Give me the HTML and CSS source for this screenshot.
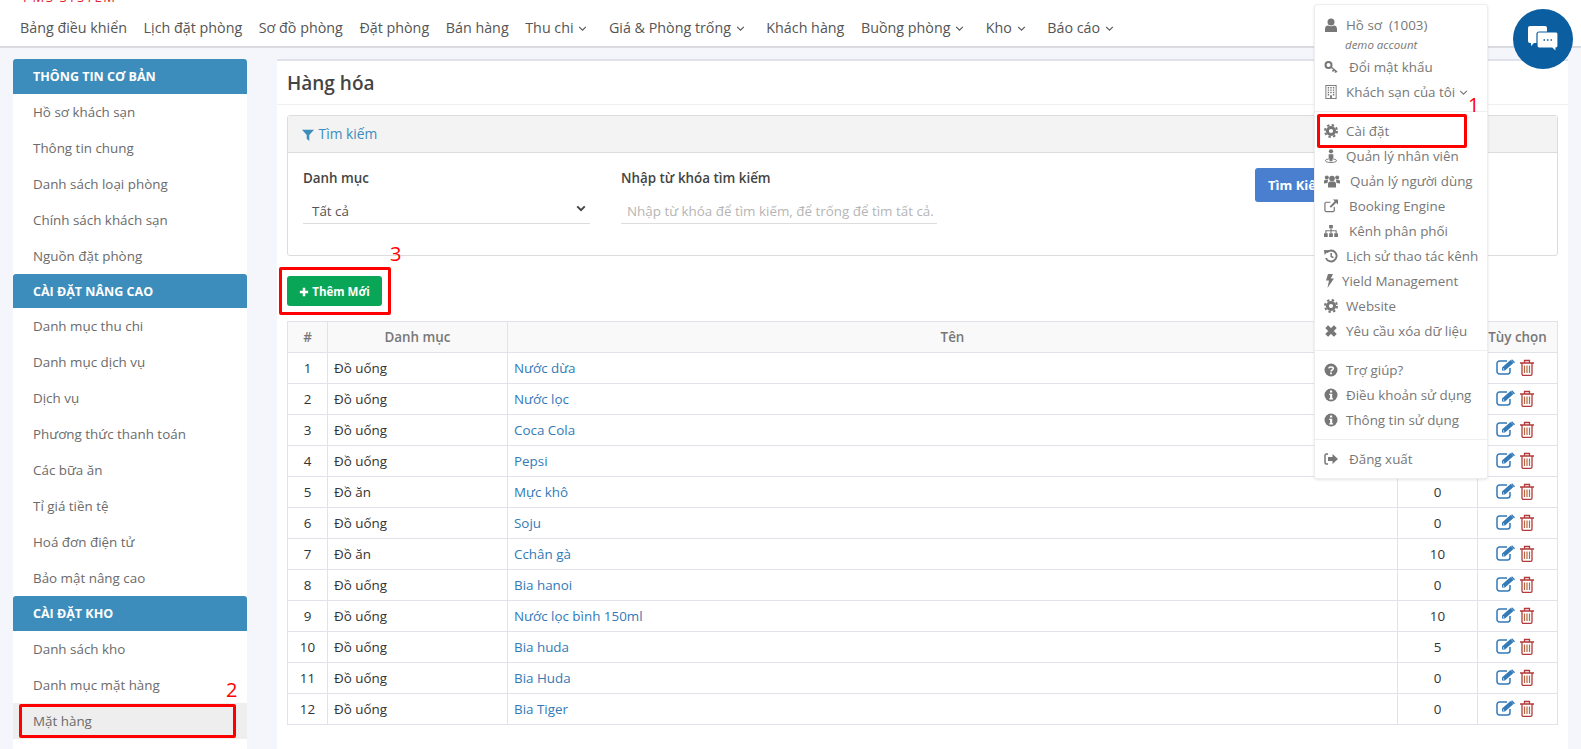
FILE: index.html
```html
<!DOCTYPE html>
<html lang="vi">
<head>
    <meta charset="UTF-8">
    <meta name="viewport" content="width=device-width, initial-scale=1.0">
    <title>Hàng hóa</title>
    <link rel="stylesheet" href="styles.css">
</head>
<body>
    <svg class="sprite" xmlns="http://www.w3.org/2000/svg">
        <symbol id="i-chev" viewBox="0 0 10 6"><path d="M1 1l4 4 4-4" fill="none" stroke="currentColor" stroke-width="1.3"/></symbol>
        <symbol id="i-chev-b" viewBox="0 0 12 8"><path d="M1.5 1.5L6 6l4.5-4.5" fill="none" stroke="currentColor" stroke-width="2.4"/></symbol>
        <symbol id="i-filter" viewBox="0 0 14 14"><path d="M0 1h14L8.5 7v7l-3-2.5V7z" fill="currentColor"/></symbol>
        <symbol id="i-plus" viewBox="0 0 12 12"><path d="M4.5 1h3v3.5H11v3H7.5V11h-3V7.5H1v-3h3.5z" fill="currentColor"/></symbol>
        <symbol id="i-edit" viewBox="0 0 20 16">
            <path d="M14 9v3.500a2.500 2.500 0 0 1-2.500 2.500H3.500A2.500 2.500 0 0 1 1 12.500V4.500A2.500 2.500 0 0 1 3.500 2H11" fill="none" stroke="#337ab7" stroke-width="1.500"/>
            <path d="M6 11.500V8.500L14.500 1l3 3L9 11.500zM16 .3l3 3-.9.9-3-3z" fill="#337ab7"/>
            <path d="M7 10.500V9l1.500 1.500z" fill="#fff"/>
        </symbol>
        <symbol id="i-trash" viewBox="0 0 14 17">
            <path d="M0 4h14M4.500 4V1.500h5V4M2 4v11a1.300 1.300 0 0 0 1.300 1.300h7.400A1.300 1.300 0 0 0 12 15V4" fill="none" stroke="#b33a3a" stroke-width="1.300"/>
            <path d="M4.500 6.500v7.500M7 6.500v7.500M9.500 6.500v7.500" fill="none" stroke="#b8683f" stroke-width="1.200"/>
        </symbol>
        <symbol id="i-user" viewBox="0 0 14 14"><circle cx="7" cy="4" r="3.500" fill="currentColor"/><path d="M1 14v-3c0-2.500 1.500-3.500 3-3.500 1.500 1 4.500 1 6 0 1.500 0 3 1 3 3.500v3z" fill="currentColor"/></symbol>
        <symbol id="i-key" viewBox="0 0 14 14"><circle cx="4.500" cy="5" r="3" fill="none" stroke="currentColor" stroke-width="2"/><path d="M7 7l6 5M10 9.500l-1.500 2M12 11l-1 1.500" fill="none" stroke="currentColor" stroke-width="1.600"/></symbol>
        <symbol id="i-building" viewBox="0 0 12 15">
            <rect x=".5" y=".5" width="11" height="14" fill="none" stroke="currentColor"/>
            <path d="M2.500 3h1.500M5.200 3h1.500M8 3h1.500M2.500 5.500h1.500M5.200 5.500h1.500M8 5.500h1.500M2.500 8h1.500M5.200 8h1.500M8 8h1.500M2.500 10.500h1.500M8 10.500h1.500" stroke="currentColor" stroke-width="1.500"/>
            <path d="M5 14v-3h2v3" fill="currentColor"/>
        </symbol>
        <symbol id="i-cog" viewBox="0 0 14 14"><circle cx="7" cy="7" r="3.600" fill="none" stroke="currentColor" stroke-width="3"/><circle cx="7" cy="7" r="6" fill="none" stroke="currentColor" stroke-width="2" stroke-dasharray="2.400 2.310"/></symbol>
        <symbol id="i-street" viewBox="0 0 14 15"><circle cx="7" cy="2.500" r="2.300" fill="currentColor"/><path d="M4.500 5.500h5v4.500h-1v3h-3v-3h-1z" fill="currentColor"/><ellipse cx="7" cy="12.500" rx="6" ry="2" fill="none" stroke="currentColor"/></symbol>
        <symbol id="i-users" viewBox="0 0 16 13"><circle cx="8" cy="4" r="2.800" fill="currentColor"/><circle cx="2.800" cy="3" r="2" fill="currentColor"/><circle cx="13.200" cy="3" r="2" fill="currentColor"/><path d="M4 13V9.500C4 8 5 7 6 7h4c1 0 2 1 2 2.500V13z" fill="currentColor"/><path d="M0 9V7c0-1 .7-1.800 1.800-1.800h2.200L3.500 8.500z M16 9V7c0-1-.7-1.800-1.800-1.800H12l.5 3.300z" fill="currentColor"/></symbol>
        <symbol id="i-external" viewBox="0 0 15 14"><path d="M11 8v3.500a1.500 1.500 0 0 1-1.500 1.500h-7A1.500 1.500 0 0 1 1 11.500v-7A1.500 1.500 0 0 1 2.500 3H7" fill="none" stroke="currentColor" stroke-width="1.300"/><path d="M9.500 0H15v5.500l-2-2-5.500 5.500-1.500-1.500L11.500 2z" fill="currentColor"/></symbol>
        <symbol id="i-sitemap" viewBox="0 0 15 13"><path d="M5.500 0h4v3.500h-4zM0 9h4v4H0zM5.500 9h4v4h-4zM11 9h4v4h-4z" fill="currentColor"/><path d="M2 9V6.300h11V9M7.500 3.500V9" fill="none" stroke="currentColor" stroke-width="1.200"/></symbol>
        <symbol id="i-history" viewBox="0 0 14 14"><path d="M2.800 3.500A5.500 5.500 0 1 1 2 9" fill="none" stroke="currentColor" stroke-width="1.900"/><path d="M0 1l5 .3L.6 6z" fill="currentColor"/><path d="M7.200 4v3.500l2.300 1.200" fill="none" stroke="currentColor" stroke-width="1.500"/></symbol>
        <symbol id="i-bolt" viewBox="0 0 8 14"><path d="M2 0h5L4.800 4.500H8L1.500 14l1.500-7.500H0z" fill="currentColor"/></symbol>
        <symbol id="i-times" viewBox="0 0 12 12"><path d="M1.800 3.500l1.700-1.700L6 4.300l2.500-2.500 1.700 1.700L7.700 6l2.500 2.500-1.700 1.700L6 7.700l-2.500 2.500-1.700-1.700L4.300 6z" fill="currentColor" stroke="currentColor"/></symbol>
        <symbol id="i-question" viewBox="0 0 14 14"><circle cx="7" cy="7" r="6.500" fill="currentColor"/><path d="M4.800 5.300C5 3.400 9.300 3.400 9.300 5.500 9.300 7 7 7 7 8.500" fill="none" stroke="#fff" stroke-width="1.500"/><path d="M6.100 9.600h1.800v1.700H6.100z" fill="#fff"/></symbol>
        <symbol id="i-info" viewBox="0 0 14 14"><circle cx="7" cy="7" r="6.500" fill="currentColor"/><path d="M6 2.600h2.200v1.900H6zM5.200 5.700h3v4.500h.9v1.300H5.200v-1.300h.9V7H5.200z" fill="#fff"/></symbol>
        <symbol id="i-signout" viewBox="0 0 14 12"><path d="M4 1H2.500A1.500 1.500 0 0 0 1 2.500v7A1.500 1.500 0 0 0 2.500 11H4" fill="none" stroke="currentColor" stroke-width="1.500"/><path d="M4 4h4.500V1L14 6l-5.500 5V8H4z" fill="currentColor"/></symbol>
    </svg>

    <header class="topbar">
        <div class="logo"><span>PMS SYSTEM</span></div>
        <nav class="menu">
            <a>Bảng điều khiển</a>
            <a>Lịch đặt phòng</a>
            <a>Sơ đồ phòng</a>
            <a>Đặt phòng</a>
            <a>Bán hàng</a>
            <a>Thu chi <svg class="chev"><use href="#i-chev"/></svg></a>
            <a>Giá &amp; Phòng trống <svg class="chev"><use href="#i-chev"/></svg></a>
            <a>Khách hàng</a>
            <a>Buồng phòng <svg class="chev"><use href="#i-chev"/></svg></a>
            <a>Kho <svg class="chev"><use href="#i-chev"/></svg></a>
            <a>Báo cáo <svg class="chev"><use href="#i-chev"/></svg></a>
        </nav>
    </header>

    <div class="page">
        <aside class="sidebar">
            <h4 class="side-head">THÔNG TIN CƠ BẢN</h4>
            <a class="side-item">Hồ sơ khách sạn</a>
            <a class="side-item">Thông tin chung</a>
            <a class="side-item">Danh sách loại phòng</a>
            <a class="side-item">Chính sách khách sạn</a>
            <a class="side-item">Nguồn đặt phòng</a>
            <h4 class="side-head">CÀI ĐẶT NÂNG CAO</h4>
            <a class="side-item">Danh mục thu chi</a>
            <a class="side-item">Danh mục dịch vụ</a>
            <a class="side-item">Dịch vụ</a>
            <a class="side-item">Phương thức thanh toán</a>
            <a class="side-item">Các bữa ăn</a>
            <a class="side-item">Tỉ giá tiền tệ</a>
            <a class="side-item">Hoá đơn điện tử</a>
            <a class="side-item">Bảo mật nâng cao</a>
            <h4 class="side-head">CÀI ĐẶT KHO</h4>
            <a class="side-item">Danh sách kho</a>
            <a class="side-item">Danh mục mặt hàng</a>
            <a class="side-item active">Mặt hàng</a>
        </aside>

        <main class="content">
            <h2 class="title">Hàng hóa</h2>
            <div class="body">
                <section class="search">
                    <div class="search-head"><svg class="filter"><use href="#i-filter"/></svg> Tìm kiếm</div>
                    <div class="search-body">
                        <div class="field field-cat">
                            <label>Danh mục</label>
                            <div class="select">Tất cả <svg class="select-arrow"><use href="#i-chev-b"/></svg></div>
                        </div>
                        <div class="field field-key">
                            <label>Nhập từ khóa tìm kiếm</label>
                            <div class="input">Nhập từ khóa để tìm kiếm, để trống để tìm tất cả.</div>
                        </div>
                        <button class="btn-search">Tìm Kiếm</button>
                    </div>
                </section>

                <button class="btn-add"><svg class="plus"><use href="#i-plus"/></svg> Thêm Mới</button>

                <table class="goods">
                    <thead>
                        <tr><th class="c-no">#</th><th class="c-cat">Danh mục</th><th>Tên</th><th class="c-qty">Tồn kho</th><th class="c-act">Tùy chọn</th></tr>
                    </thead>
                    <tbody>
                        <tr><td class="mid">1</td><td>Đồ uống</td><td><a>Nước dừa</a></td><td class="mid">0</td><td class="mid"><svg class="edit"><use href="#i-edit"/></svg><svg class="trash"><use href="#i-trash"/></svg></td></tr>
                        <tr><td class="mid">2</td><td>Đồ uống</td><td><a>Nước lọc</a></td><td class="mid">0</td><td class="mid"><svg class="edit"><use href="#i-edit"/></svg><svg class="trash"><use href="#i-trash"/></svg></td></tr>
                        <tr><td class="mid">3</td><td>Đồ uống</td><td><a>Coca Cola</a></td><td class="mid">0</td><td class="mid"><svg class="edit"><use href="#i-edit"/></svg><svg class="trash"><use href="#i-trash"/></svg></td></tr>
                        <tr><td class="mid">4</td><td>Đồ uống</td><td><a>Pepsi</a></td><td class="mid">0</td><td class="mid"><svg class="edit"><use href="#i-edit"/></svg><svg class="trash"><use href="#i-trash"/></svg></td></tr>
                        <tr><td class="mid">5</td><td>Đồ ăn</td><td><a>Mực khô</a></td><td class="mid">0</td><td class="mid"><svg class="edit"><use href="#i-edit"/></svg><svg class="trash"><use href="#i-trash"/></svg></td></tr>
                        <tr><td class="mid">6</td><td>Đồ uống</td><td><a>Soju</a></td><td class="mid">0</td><td class="mid"><svg class="edit"><use href="#i-edit"/></svg><svg class="trash"><use href="#i-trash"/></svg></td></tr>
                        <tr><td class="mid">7</td><td>Đồ ăn</td><td><a>Cchân gà</a></td><td class="mid">10</td><td class="mid"><svg class="edit"><use href="#i-edit"/></svg><svg class="trash"><use href="#i-trash"/></svg></td></tr>
                        <tr><td class="mid">8</td><td>Đồ uống</td><td><a>Bia hanoi</a></td><td class="mid">0</td><td class="mid"><svg class="edit"><use href="#i-edit"/></svg><svg class="trash"><use href="#i-trash"/></svg></td></tr>
                        <tr><td class="mid">9</td><td>Đồ uống</td><td><a>Nước lọc bình 150ml</a></td><td class="mid">10</td><td class="mid"><svg class="edit"><use href="#i-edit"/></svg><svg class="trash"><use href="#i-trash"/></svg></td></tr>
                        <tr><td class="mid">10</td><td>Đồ uống</td><td><a>Bia huda</a></td><td class="mid">5</td><td class="mid"><svg class="edit"><use href="#i-edit"/></svg><svg class="trash"><use href="#i-trash"/></svg></td></tr>
                        <tr><td class="mid">11</td><td>Đồ uống</td><td><a>Bia Huda</a></td><td class="mid">0</td><td class="mid"><svg class="edit"><use href="#i-edit"/></svg><svg class="trash"><use href="#i-trash"/></svg></td></tr>
                        <tr><td class="mid">12</td><td>Đồ uống</td><td><a>Bia Tiger</a></td><td class="mid">0</td><td class="mid"><svg class="edit"><use href="#i-edit"/></svg><svg class="trash"><use href="#i-trash"/></svg></td></tr>
                    </tbody>
                </table>
            </div>
        </main>
    </div>

    <div class="dropdown">
        <ul class="drop-group first">
            <li class="profile"><svg class="ico"><use href="#i-user"/></svg>Hồ sơ &nbsp;(1003)</li>
            <li class="demo">demo account</li>
            <li class="far"><svg class="ico"><use href="#i-key"/></svg>Đổi mật khẩu</li>
            <li><svg class="ico"><use href="#i-building"/></svg>Khách sạn của tôi <svg class="chev"><use href="#i-chev"/></svg></li>
        </ul>
        <ul class="drop-group">
            <li><svg class="ico"><use href="#i-cog"/></svg>Cài đặt</li>
            <li><svg class="ico"><use href="#i-street"/></svg>Quản lý nhân viên</li>
            <li class="farther"><svg class="ico wide"><use href="#i-users"/></svg>Quản lý người dùng</li>
            <li class="far"><svg class="ico"><use href="#i-external"/></svg>Booking Engine</li>
            <li class="far"><svg class="ico"><use href="#i-sitemap"/></svg>Kênh phân phối</li>
            <li><svg class="ico"><use href="#i-history"/></svg>Lịch sử thao tác kênh</li>
            <li><svg class="ico bolt"><use href="#i-bolt"/></svg>Yield Management</li>
            <li><svg class="ico"><use href="#i-cog"/></svg>Website</li>
            <li><svg class="ico"><use href="#i-times"/></svg>Yêu cầu xóa dữ liệu</li>
        </ul>
        <ul class="drop-group">
            <li><svg class="ico"><use href="#i-question"/></svg>Trợ giúp?</li>
            <li><svg class="ico"><use href="#i-info"/></svg>Điều khoản sử dụng</li>
            <li><svg class="ico"><use href="#i-info"/></svg>Thông tin sử dụng</li>
        </ul>
        <ul class="drop-group">
            <li class="far"><svg class="ico"><use href="#i-signout"/></svg>Đăng xuất</li>
        </ul>
    </div>

    <div class="chat">
        <svg class="chat-ico" viewBox="0 0 32 28">
            <path d="M3 1h15a2 2 0 0 1 2 2v13a2 2 0 0 1-2 2H7l-3 3v-3H3a2 2 0 0 1-2-2V3a2 2 0 0 1 2-2z" fill="#fff"/>
            <path d="M12 7h17a2 2 0 0 1 2 2v12a2 2 0 0 1-2 2v4l-4-4H12a2 2 0 0 1-2-2V9a2 2 0 0 1 2-2z" fill="#fff" stroke="#0b5ea0" stroke-width="1.200"/>
            <path d="M16.500 15h1.500M20 15h1.500M23.500 15H25" stroke="#0b5ea0" stroke-width="1.300"/>
        </svg>
    </div>

    <div class="mark mark-setting"></div>
    <div class="mark mark-item"></div>
    <div class="mark mark-add"></div>
    <span class="mark-no no-1">1</span>
    <span class="mark-no no-2">2</span>
    <span class="mark-no no-3">3</span>
</body>
</html>
```

FILE: styles.css
```css
* {
    box-sizing: border-box;
}

html, body {
    margin: 0;
    height: 100%;
    overflow: hidden;
}

body {
    background-color: #f4f6fb;
    color: #333;
    font-family: "Open Sans", "Noto Sans", sans-serif;
    font-size: 13.4px;
}

.sprite {
    display: none;
}

/* top bar */
.topbar {
    height: 48px;
    background-color: #fff;
    border-bottom: 2px solid #d9dbde;
}

.logo {
    height: 2px;
    margin-left: 23px;
    overflow: hidden;
    display: flex;
    align-items: flex-end;
    color: #e3242b;
    font-size: 13px;
    line-height: 10px;
    letter-spacing: 1.6px;
}

.menu {
    display: flex;
    gap: 16.6px;
    padding: 15px 0 0 20px;
    font-size: 14.3px;
    line-height: 22px;
    color: #555;
}

.chev {
    width: 9px;
    height: 5px;
    margin-left: 1px;
    vertical-align: 2px;
}

.menu .chev {
    margin-right: 5px;
}

.page {
    display: flex;
    height: calc(100% - 48px);
    padding: 11px 13px 0;
    gap: 30px;
}

/* sidebar */
.sidebar {
    flex: 0 0 234px;
    background-color: #fff;
}

.side-head {
    margin: 0;
    height: 34.7px;
    padding-left: 20px;
    background-color: #3c8dbc;
    border-radius: 3px 3px 0 0;
    color: #fff;
    font-size: 12.5px;
    font-weight: 700;
    line-height: 36px;
}

.side-item {
    display: block;
    height: 36px;
    padding-left: 20px;
    color: #6b6b6b;
    line-height: 36px;
}

.side-item.active {
    background-color: #eee;
}

/* main panel */
.content {
    flex: 1;
    background-color: #fff;
    border-top: 2px solid #dfe2ea;
}

.title {
    margin: 0;
    height: 44px;
    padding-left: 10px;
    border-bottom: 1px solid #f0f0f0;
    color: #444;
    font-size: 19px;
    font-weight: 600;
    line-height: 44px;
}

.body {
    padding: 10px 10px 0;
}

.search {
    height: 141px;
    border: 1px solid #dcdcdc;
    border-radius: 3px;
}

.search-head {
    height: 37px;
    padding-left: 14px;
    background-color: #f3f3f3;
    border-bottom: 1px solid #dcdcdc;
    color: #3c8dbc;
    font-size: 13.8px;
    font-weight: 500;
    line-height: 36px;
}

.filter {
    width: 12px;
    height: 12px;
    margin-right: 1px;
    vertical-align: -2px;
}

.search-body {
    display: flex;
    padding: 15px 15px 0;
}

.field label {
    display: block;
    font-weight: 600;
    color: #444;
    line-height: 20px;
}

.field-cat {
    width: 287px;
    margin-right: 31px;
}

.field-key {
    width: 316px;
}

.select, .input {
    height: 30px;
    margin-top: 6px;
    border-bottom: 1px solid #ddd;
    line-height: 34px;
}

.select {
    position: relative;
    padding-left: 9px;
    color: #555;
}

.select-arrow {
    position: absolute;
    right: 4px;
    top: 11px;
    width: 10px;
    height: 7px;
    color: #444;
}

.input {
    padding-left: 6px;
    color: #b5b5b5;
}

.btn-search {
    height: 34px;
    width: 100px;
    margin-left: 318px;
    padding: 0 0 0 13px;
    border: 0;
    border-radius: 3px;
    background-color: #4a7fd0;
    color: #fff;
    font-family: inherit;
    font-size: 13px;
    font-weight: 700;
    text-align: left;
}

.btn-add {
    display: block;
    width: 95px;
    height: 30px;
    margin: 20px 0 15px;
    padding: 0;
    border: 0;
    border-radius: 3px;
    background-color: #0aa658;
    color: #fff;
    font-family: inherit;
    font-size: 11.5px;
    font-weight: 700;
}

.plus {
    width: 10px;
    height: 10px;
    vertical-align: -1px;
}

/* goods table */
.goods {
    width: 100%;
    table-layout: fixed;
    border-collapse: collapse;
}

.goods th, .goods td {
    height: 31px;
    padding: 0 6px;
    border: 1px solid #e0e3ea;
    line-height: 18px;
}

.goods th {
    background-color: #f9f9f9;
    color: #777;
    font-weight: 600;
    text-align: center;
}

.goods td a {
    color: #337ab7;
}

.goods td.mid {
    text-align: center;
}

.c-no { width: 40px; }
.c-cat { width: 180px; }
.c-qty { width: 80px; }
.c-act { width: 80px; }

.edit {
    width: 20px;
    height: 16px;
    margin-bottom: 2px;
    vertical-align: middle;
}

.trash {
    width: 14px;
    height: 17px;
    margin: 0 6px 2px 4px;
    vertical-align: middle;
}

/* account dropdown */
.dropdown {
    position: absolute;
    left: 1314px;
    top: 4px;
    width: 174px;
    height: 475px;
    background-color: #fff;
    border: 1px solid #eee;
    border-radius: 3px;
    box-shadow: 0 1px 3px rgba(0, 0, 0, 0.1);
    color: #777;
}

.drop-group {
    margin: 0;
    padding: 6.5px 0;
    list-style: none;
    border-top: 1px solid #eee;
}

.drop-group.first {
    border-top: 0;
    padding-top: 7.5px;
}

.drop-group li {
    display: flex;
    align-items: center;
    height: 25px;
    padding-left: 9px;
    white-space: nowrap;
}

.drop-group li.demo {
    height: 13px;
    margin-bottom: 4px;
    padding-left: 30px;
    font-size: 11.5px;
    font-style: italic;
}

.ico {
    flex: 0 0 14px;
    width: 14px;
    height: 14px;
    margin-right: 8px;
    color: #777;
}

.far .ico { margin-right: 11px; }
.farther .ico { margin-right: 10px; }

.ico.wide {
    flex-basis: 16px;
    width: 16px;
}

.bolt {
    flex-basis: 8px;
    width: 8px;
    margin-left: 2px;
}

.dropdown .chev {
    margin-left: 4px;
}

/* chat bubble */
.chat {
    position: absolute;
    left: 1513px;
    top: 9px;
    width: 60px;
    height: 60px;
    display: flex;
    align-items: center;
    justify-content: center;
    border-radius: 50%;
    background-color: #0b5ea0;
}

.chat-ico {
    width: 32px;
    height: 28px;
}

/* red annotation marks */
.mark {
    position: absolute;
    border: 3px solid #f00;
    border-radius: 2px;
}

.mark-setting {
    left: 1317px;
    top: 114px;
    width: 150px;
    height: 34px;
}

.mark-item {
    left: 19px;
    top: 704px;
    width: 217px;
    height: 34px;
}

.mark-add {
    left: 279px;
    top: 267px;
    width: 112px;
    height: 48px;
}

.mark-no {
    position: absolute;
    color: #f00;
    font-family: "Open Sans", sans-serif;
    font-size: 20px;
    font-weight: 400;
    line-height: 20px;
}

.no-1 { left: 1468px; top: 95px; }
.no-2 { left: 226px; top: 680px; }
.no-3 { left: 390px; top: 244px; }
```
